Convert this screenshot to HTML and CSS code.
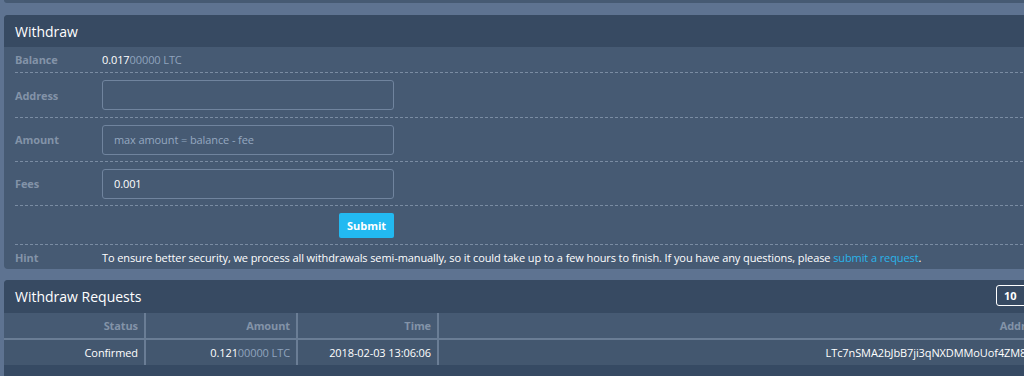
FILE: index.html
```html
<!DOCTYPE html>
<html>
<head>
<meta charset="utf-8">
<link rel="stylesheet" href="styles.css">
</head>
<body>
<div class="page">
  <div class="panel top-stub"></div>

  <div class="panel">
    <div class="panel-head"><span class="panel-title">Withdraw</span></div>
    <div class="panel-body">
      <div class="row row-balance">
        <div class="label">Balance</div>
        <div class="value">0.017<span class="dim">00000 LTC</span></div>
      </div>
      <div class="row row-input">
        <div class="label">Address</div>
        <div class="value"><input class="field" type="text"></div>
      </div>
      <div class="row row-input">
        <div class="label">Amount</div>
        <div class="value"><input class="field" type="text" placeholder="max amount = balance - fee"></div>
      </div>
      <div class="row row-input">
        <div class="label">Fees</div>
        <div class="value"><input class="field" type="text" value="0.001"></div>
      </div>
      <div class="row row-submit">
        <div class="label"></div>
        <div class="value submit-wrap"><button class="btn">Submit</button></div>
      </div>
      <div class="row row-hint last">
        <div class="label">Hint</div>
        <div class="value">To ensure better security, we process all withdrawals semi-manually, so it could take up to a few hours to finish. If you have any questions, please <a class="link" href="#">submit a request</a>.</div>
      </div>
    </div>
  </div>

  <div class="panel panel-requests">
    <div class="panel-head head-requests">
      <span class="panel-title">Withdraw Requests</span>
      <div class="select"><span class="select-val">10</span><span class="caret">&#9662;</span></div>
    </div>
    <table class="table">
      <thead>
        <tr>
          <th class="c-status">Status</th>
          <th class="c-amount">Amount</th>
          <th class="c-time">Time</th>
          <th class="c-addr">Address</th>
        </tr>
      </thead>
      <tbody>
        <tr>
          <td>Confirmed</td>
          <td>0.121<span class="dim">00000 LTC</span></td>
          <td>2018-02-03 13:06:06</td>
          <td>LTc7nSMA2bJbB7ji3qNXDMMoUof4ZM8Pfq</td>
        </tr>
      </tbody>
    </table>
    <div class="table-foot"></div>
  </div>
</div>
</body>
</html>
```

FILE: styles.css
```css
html, body {
  margin: 0;
  padding: 0;
  background: #5e7391;
  overflow: hidden;
  height: 376px;
}

body {
  font-family: "Open Sans", "DejaVu Sans", sans-serif;
  font-size: 11px;
  letter-spacing: -0.1px;
  color: #ffffff;
}

.page {
  width: 1300px;
  padding: 0 0 0 4px;
}

.panel {
  background: #465a73;
  border-radius: 4px;
  margin-bottom: 11px;
  overflow: hidden;
}

.top-stub {
  height: 3px;
  border-radius: 0 0 4px 4px;
  margin-bottom: 12px;
}

.panel-head {
  background: #374a62;
  height: 32px;
  display: flex;
  align-items: center;
  padding: 0 11px;
}

.panel-title {
  font-size: 14px;
  color: #ffffff;
  letter-spacing: 0;
}

.panel-body {
  padding: 0 11px 0 11px;
}

.row {
  display: flex;
  align-items: center;
  border-bottom: 1px dashed #7a8ca3;
}

.row.last {
  border-bottom: none;
}

.label {
  width: 87px;
  flex: none;
  font-weight: 700;
  color: #8393a8;
}

.value {
  flex: 1;
  color: #ffffff;
}

.dim {
  color: #8fa3bd;
}

.row-balance {
  height: 25px;
}

.row-input {
  height: 43px;
}

.row-input:nth-child(2) {
  height: 44px;
}

.row-submit {
  height: 38px;
}

.row-hint {
  height: 24px;
}

.field {
  box-sizing: border-box;
  width: 292px;
  height: 30px;
  background: #465a73;
  border: 1px solid #70849e;
  border-radius: 3px;
  padding: 0 11px;
  font-family: "Open Sans", "DejaVu Sans", sans-serif;
  font-size: 11px;
  letter-spacing: -0.1px;
  color: #ffffff;
  outline: none;
}

.field::placeholder {
  color: #95a8c0;
}

.submit-wrap {
  flex: none;
  width: 292px;
  display: flex;
  justify-content: flex-end;
}

.btn {
  background: #22b9f1;
  border: none;
  border-radius: 2px;
  height: 25px;
  width: 55px;
  padding: 0;
  color: #ffffff;
  font-family: "Open Sans", "DejaVu Sans", sans-serif;
  font-weight: 700;
  font-size: 11px;
}

.link {
  color: #2ab4ea;
  text-decoration: none;
}

.head-requests {
  height: 33px;
  justify-content: space-between;
  padding-right: 0;
}

.select {
  width: 60px;
  height: 19px;
  border: 1.5px solid #ffffff;
  border-radius: 3px;
  display: flex;
  align-items: center;
  padding-left: 7px;
  gap: 9px;
  margin-right: 239px;
  margin-top: -2px;
}

.select-val {
  font-weight: 700;
  font-size: 11px;
}

.caret {
  font-size: 9px;
  color: #cfd8e3;
}

.table {
  border-collapse: collapse;
  width: 1045px;
  table-layout: fixed;
}

.table th,
.table td {
  text-align: right;
  padding: 0 6px 0 6px;
  border-left: 2px solid #6a7d95;
  white-space: nowrap;
}

.table th:first-child,
.table td:first-child {
  border-left: none;
}

.table th {
  height: 25px;
  font-weight: 700;
  color: #8393a8;
  background: #465a73;
  border-bottom: 2px solid #6a7d95;
}

.table td {
  height: 25px;
  background: #43576f;
  color: #ffffff;
}

.c-status { width: 128px; }
.c-amount { width: 138px; }
.c-time { width: 127px; }

.table-foot {
  height: 20px;
  background: #364a63;
}
```
